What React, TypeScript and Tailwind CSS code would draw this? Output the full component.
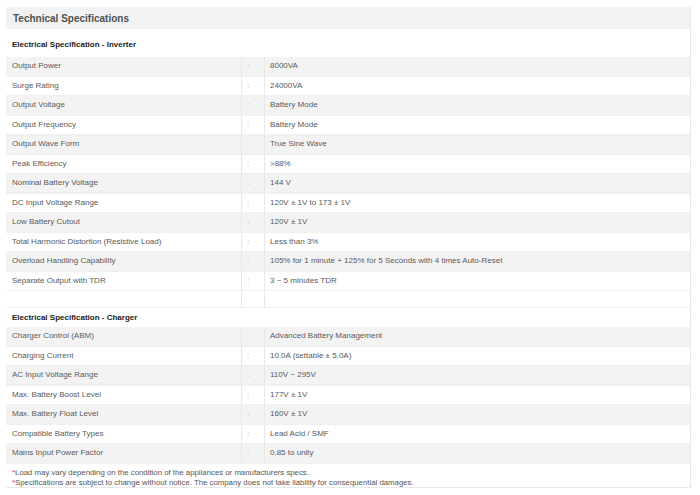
import React from "react";

const inverter: [string, string][] = [
  ["Output Power", "8000VA"],
  ["Surge Rating", "24000VA"],
  ["Output Voltage", "Battery Mode"],
  ["Output Frequency", "Battery Mode"],
  ["Output Wave Form", "True Sine Wave"],
  ["Peak Efficiency", ">88%"],
  ["Nominal Battery Voltage", "144 V"],
  ["DC Input Voltage Range", "120V ± 1V to 173 ± 1V"],
  ["Low Battery Cutout", "120V ± 1V"],
  ["Total Harmonic Distortion (Resistive Load)", "Less than 3%"],
  ["Overload Handling Capability", "105% for 1 minute + 125% for 5 Seconds with 4 times Auto-Reset"],
  ["Separate Output with TDR", "3 ~ 5 minutes TDR"],
];

const charger: [string, string][] = [
  ["Charger Control (ABM)", "Advanced Battery Management"],
  ["Charging Current", "10.0A (settable ± 5.0A)"],
  ["AC Input Voltage Range", "110V ~ 295V"],
  ["Max. Battery Boost Level", "177V ± 1V"],
  ["Max. Battery Float Level", "160V ± 1V"],
  ["Compatible Battery Types", "Lead Acid / SMF"],
  ["Mains Input Power Factor", "0.85 to unity"],
];

function Row({ label, value, gray }: { label: string; value: string; gray: boolean }) {
  return (
    <div
      className={`grid grid-cols-[236px_23px_1fr] h-[19.5px] items-stretch border-b border-[#efefef] ${
        gray ? "bg-[#f3f3f4]" : "bg-white"
      }`}
    >
      <div className="flex items-center pl-[6px] border-r border-[#e8e8e8]">{label}</div>
      <div className="flex items-center pl-[5px] border-r border-[#e8e8e8] text-[#aaa]">:</div>
      <div className="flex items-center pl-[5px]">{value}</div>
    </div>
  );
}

export default function App() {
  return (
    <div className="w-[700px] h-[495px] bg-white pt-[7px] pl-[6px]" style={{ fontFamily: '"Liberation Sans", Arial, sans-serif' }}>
      <div className="w-[685px] h-[481px] border-r border-b border-[#e9e9e9] text-[8px] text-[#5a5a5a]">
        <div className="h-[22px] bg-[#f1f2f4] flex items-center pl-[7px] text-[10px] font-bold text-[#505050]">
          Technical Specifications
        </div>
        <div className="h-[28px] flex items-end pb-[6px] pl-[6px] font-bold text-[#222]">
          Electrical Specification - Inverter
        </div>
        {inverter.map(([l, v], i) => (
          <Row key={l} label={l} value={v} gray={i % 2 === 0} />
        ))}
        <div className="grid grid-cols-[236px_23px_1fr] h-[17px] border-b border-[#efefef]">
          <div className="border-r border-[#e8e8e8]" />
          <div className="border-r border-[#e8e8e8]" />
          <div />
        </div>
        <div className="h-[19px] flex items-center pl-[6px] font-bold text-[#222]">
          Electrical Specification - Charger
        </div>
        {charger.map(([l, v], i) => (
          <Row key={l} label={l} value={v} gray={i % 2 === 0} />
        ))}
        <div className="pl-[6px] pt-[4px] leading-[10px] text-[7.8px] text-[#555]">
          <div>
            <span className="text-[#e33]">*</span>Load may vary depending on the condition of the appliances or manufacturers specs.
          </div>
          <div>
            <span className="text-[#e33]">*</span>Specifications are subject to change without notice. The company does not take liability for consequential damages.
          </div>
        </div>
      </div>
    </div>
  );
}
